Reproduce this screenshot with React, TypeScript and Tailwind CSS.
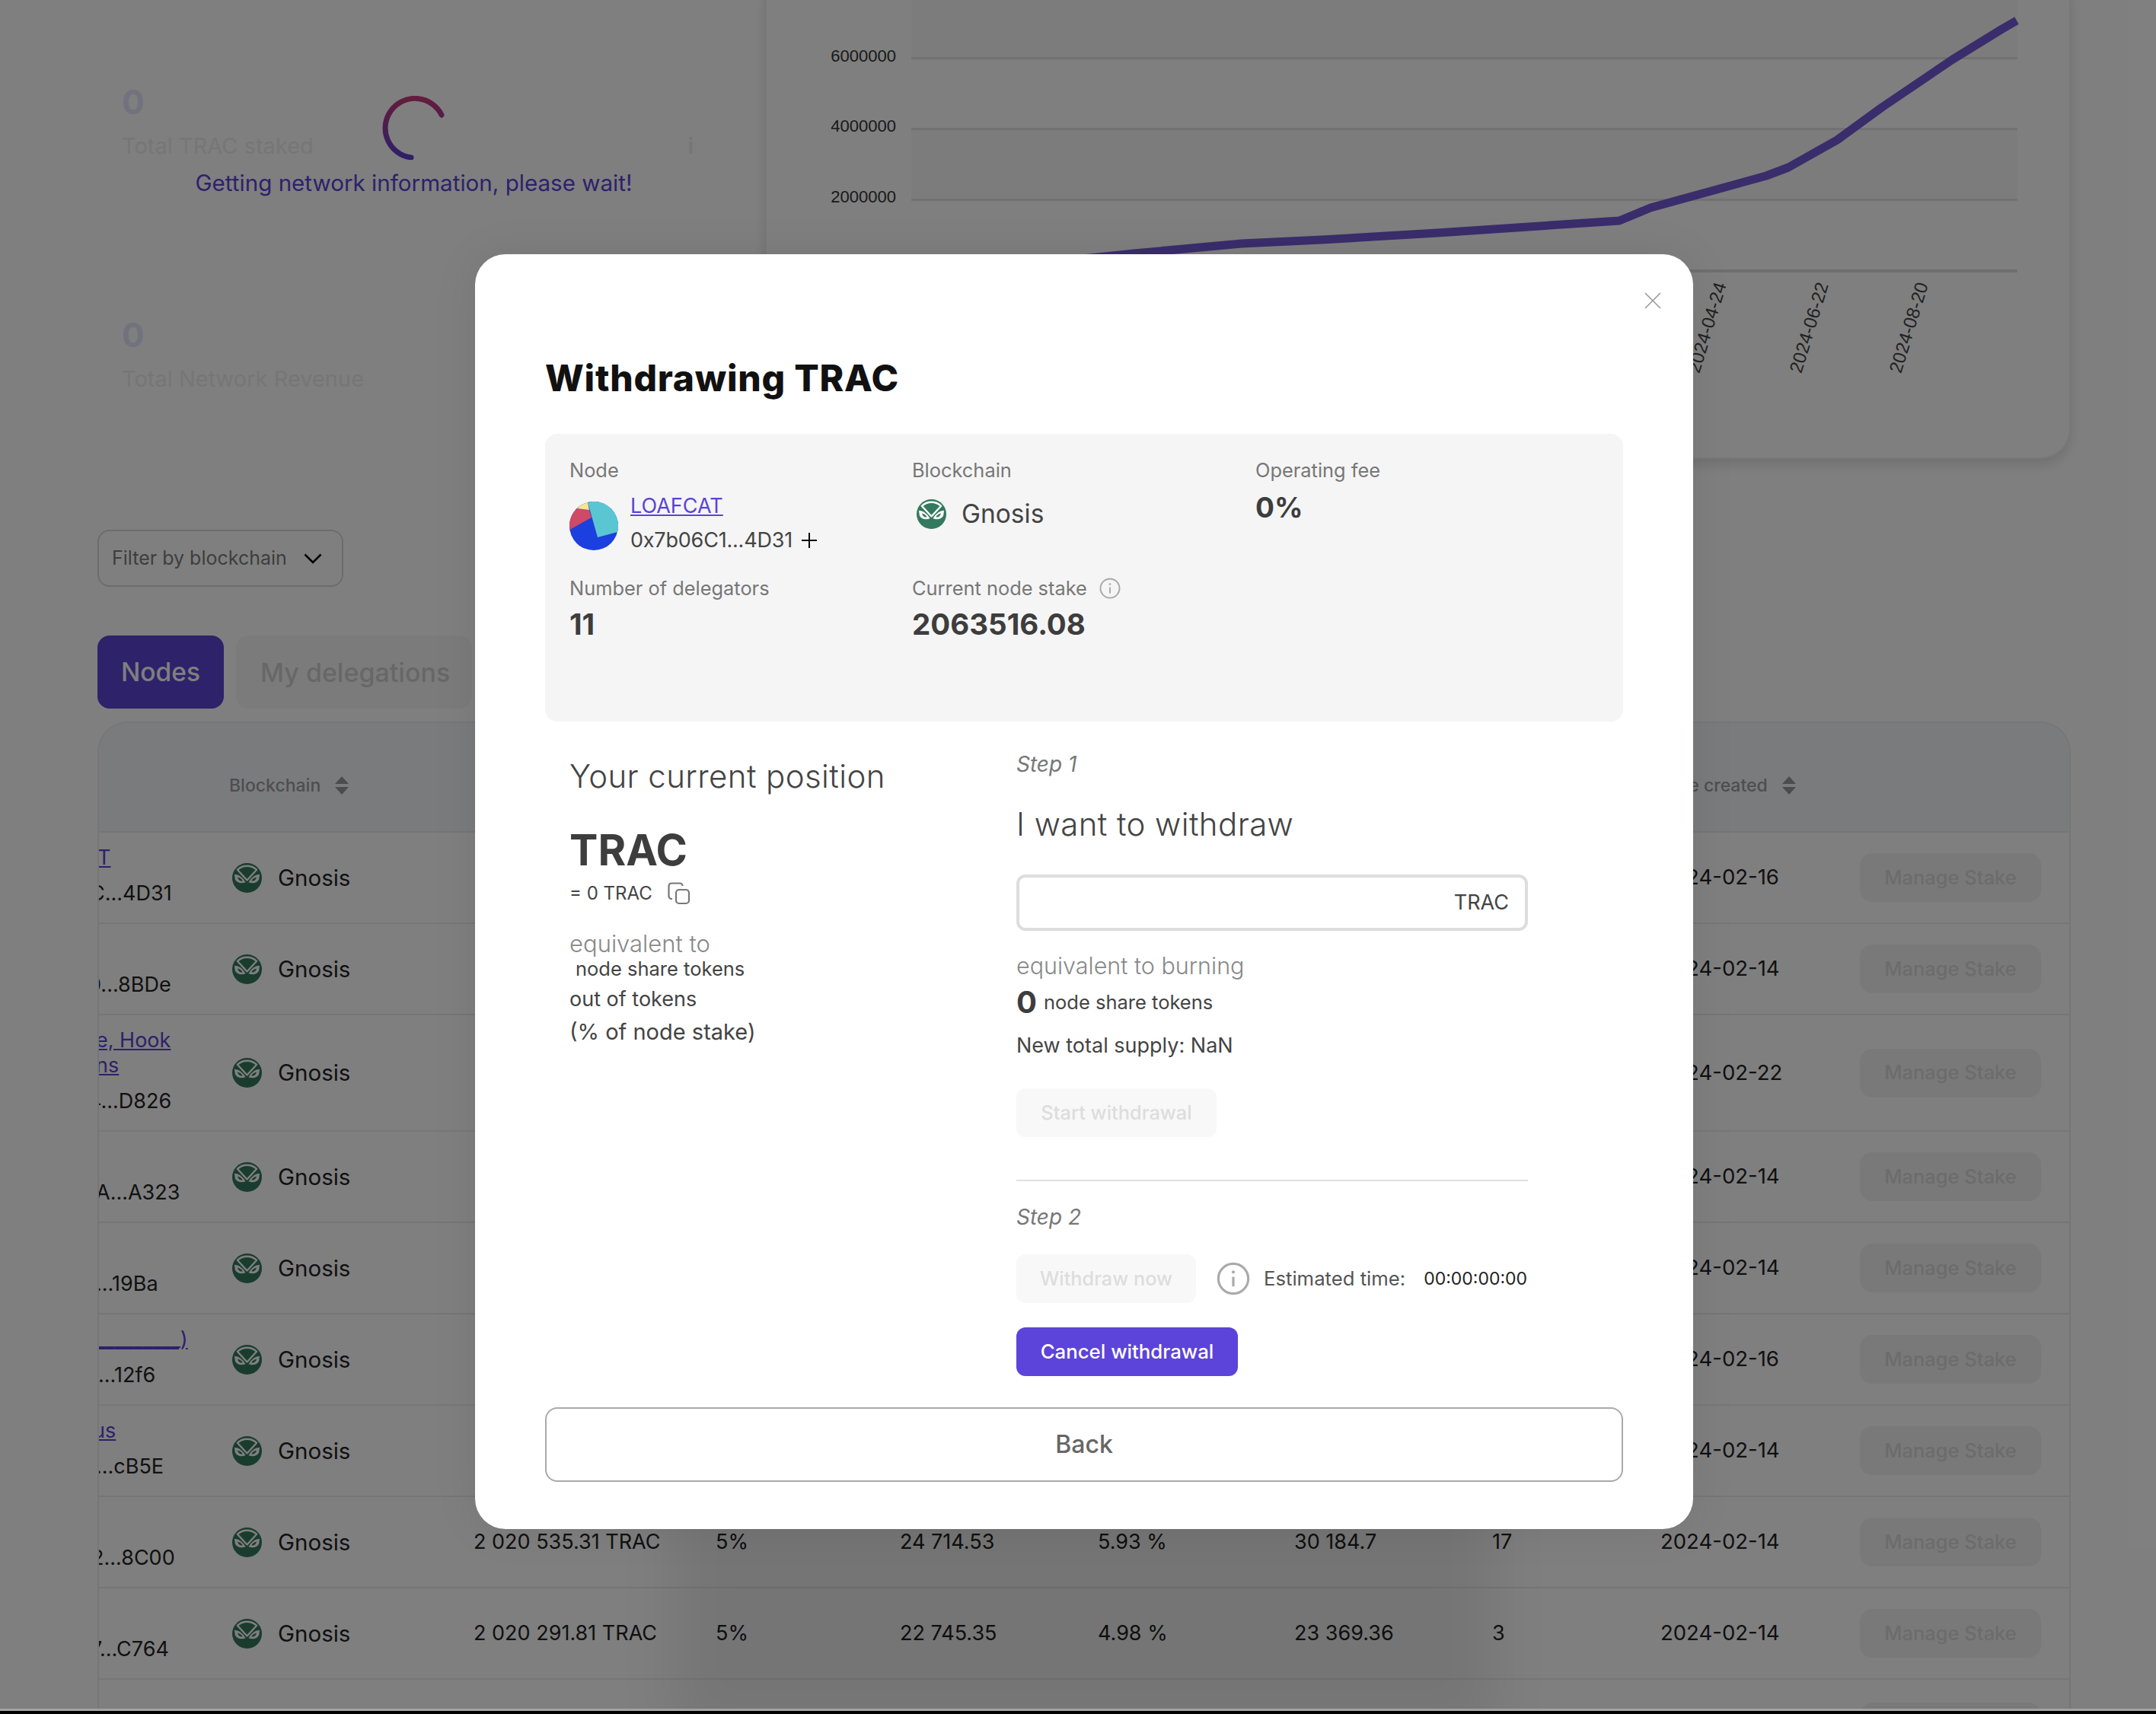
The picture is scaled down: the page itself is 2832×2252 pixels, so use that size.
import React from 'react';

const COLS = 'grid grid-cols-[171px_321px_318px_242px_260px_258px_260px_221px_262px_1fr]';

interface Row {
  name?: string[];
  addr: string;
  date: string;
  nameShift?: string;
  addrShift: string;
  cells?: string[];
}

// the table is scrolled sideways, so the name column is cut at its left edge
const ROWS: Row[] = [
  { name: ['T'], nameShift: '-ml-[2px]', addr: 'C...4D31', addrShift: '-ml-[12px]', date: '2024-02-16' },
  { addr: '0...8BDe', addrShift: '-ml-[14px]', date: '2024-02-14' },
  { name: ['e, Hook', 'ns'], nameShift: '-ml-[4px]', addr: '4...D826', addrShift: '-ml-[14px]', date: '2024-02-22' },
  { addr: 'A...A323', addrShift: '-ml-[4px]', date: '2024-02-14' },
  { addr: '...19Ba', addrShift: '-ml-[4px]', date: '2024-02-14' },
  { name: ['_________)'], nameShift: '-ml-[4px]', addr: 'F...12f6', addrShift: '-ml-[16px]', date: '2024-02-16' },
  { name: ['us'], nameShift: '-ml-[8px]', addr: '...cB5E', addrShift: '-ml-[4px]', date: '2024-02-14' },
  { addr: '2...8C00', addrShift: '-ml-[10px]', date: '2024-02-14', cells: ['2 020 535.31 TRAC', '5%', '24 714.53', '5.93 %', '30 184.7', '17'] },
  { addr: '7...C764', addrShift: '-ml-[11px]', date: '2024-02-14', cells: ['2 020 291.81 TRAC', '5%', '22 745.35', '4.98 %', '23 369.36', '3'] },
];

function GnosisIcon({ className }: { className: string }) {
  return (
    <svg viewBox="0 0 40 40" className={className}>
      <circle cx="20" cy="20" r="20" fill="#33795f" />
      <path d="M7 9 A19 19 0 0 1 33 9 L20 23 Z" fill="#33795f" stroke="#fff" strokeWidth="2.4" strokeLinejoin="round" />
      <path d="M3 15 Q12 15 18 26 Q8 29 4 22 Z" fill="#fff" />
      <path d="M37 15 Q28 15 22 26 Q32 29 36 22 Z" fill="#fff" />
      <path d="M7 19 Q12 20 14 24 Q9 25 7 19 Z" fill="#33795f" />
      <path d="M33 19 Q28 20 26 24 Q31 25 33 19 Z" fill="#33795f" />
    </svg>
  );
}

function InfoIcon({ className }: { className: string }) {
  return (
    <svg viewBox="0 0 28 28" fill="none" className={className}>
      <circle cx="14" cy="14" r="12.5" stroke="#aaa" strokeWidth="2" />
      <path d="M14 12.5V20.5" stroke="#aaa" strokeWidth="2" />
      <circle cx="14" cy="8.5" r="1.3" fill="#aaa" />
    </svg>
  );
}

function SortIcon() {
  return (
    <svg viewBox="0 0 20 26" className="w-[20px] h-[26px]">
      <path d="M10 1 L19 11 H1 Z M10 25 L19 15 H1 Z" fill="#999" />
    </svg>
  );
}

function Chart() {
  return (
    <svg viewBox="1007 -38 1711 639" className="w-full h-full">
      <rect x="1197" y="-38" width="1453" height="114" fill="#f8f8f8" />
      <rect x="1197" y="169" width="1453" height="93" fill="#f8f8f8" />
      {[76, 169, 262].map(y => (
        <rect key={y} x="1197" y={y - 1} width="1453" height="3" fill="#e2e2e2" />
      ))}
      <rect x="1197" y="354" width="1453" height="4" fill="#dedede" />
      {[['6000000', 81], ['4000000', 173], ['2000000', 266]].map(([label, y]) => (
        <text key={label} x="1177" y={y} textAnchor="end" fontSize="22" fill="#333" fontFamily="Liberation Sans, sans-serif">
          {label}
        </text>
      ))}
      <polyline
        points="1300,350 1432,339 1490,333 1631,320 1736,315 1888,306 2127,290 2168,273 2320,231 2349,220 2413,184 2472,141 2565,78 2630,38 2649,27"
        fill="none"
        stroke="#745ad8"
        strokeWidth="11"
        strokeLinejoin="round"
      />
      {[['2024-04-24', 2268], ['2024-06-22', 2402], ['2024-08-20', 2533]].map(([label, x]) => (
        <text
          key={label}
          transform={`translate(${x} 374) rotate(-73)`}
          textAnchor="end"
          fontSize="24"
          fill="#444"
          fontFamily="Liberation Sans, sans-serif"
        >
          {label}
        </text>
      ))}
    </svg>
  );
}

function Background() {
  return (
    <div className="flex-1 min-h-0 overflow-hidden pl-[128px] pr-[112px]">
      {/* top stats + chart */}
      <div className="flex h-[603px]">
        <div className="relative w-[877px] shrink-0 pl-[32px] pt-[102px]">
          <div className="text-[44px] leading-[64px] font-bold text-[#e4e4fc]">0</div>
          <div className="text-[29px] leading-[48px] text-[#ececec] flex justify-between pr-[94px] mt-[2px]">
            <span>Total TRAC staked</span>
            <span className="font-bold">i</span>
          </div>
          <div className="text-[44px] leading-[64px] font-bold text-[#e4e4fc] mt-[192px]">0</div>
          <div className="text-[29px] leading-[48px] text-[#ececec] mt-[2px]">Total Network Revenue</div>
          {/* loading overlay */}
          <div className="absolute left-[129px] top-[126px] w-[573px] flex flex-col items-center">
            <svg viewBox="0 0 84 84" className="w-[84px] h-[84px]">
              <defs>
                <linearGradient id="spin" x1="0" y1="0" x2="0" y2="1">
                  <stop offset="0" stopColor="#c8387a" />
                  <stop offset="1" stopColor="#5a3fd0" />
                </linearGradient>
              </defs>
              <path d="M78 25 A39 39 0 1 0 38 81" fill="none" stroke="url(#spin)" strokeWidth="7" strokeLinecap="round" />
            </svg>
            <div className="text-[29.6px] leading-[40px] text-[#5b43d6] whitespace-nowrap mt-[10px]">
              Getting network information, please wait!
            </div>
          </div>
        </div>
        <div className="w-[1715px] shrink-0 h-[643px] -mt-[40px] bg-white border-2 border-[#f0f0f0] rounded-[40px] shadow-[0_8px_16px_rgba(0,0,0,0.12)] overflow-hidden">
          <Chart />
        </div>
      </div>

      <div className="mt-[93px] w-[323px] h-[75px] border-2 border-[#d8d8d8] rounded-[16px] flex items-center justify-between pl-[17px] pr-[26px]">
        <span className="text-[25px] text-[#7d7d7d]">Filter by blockchain</span>
        <svg viewBox="0 0 24 14" className="w-[24px] h-[14px]" fill="none">
          <path d="M1.5 1.5 L12 12 L22.5 1.5" stroke="#000" strokeWidth="2.6" />
        </svg>
      </div>

      <div className="mt-[64px] flex gap-[16px]">
        <div className="w-[166px] h-[96px] rounded-[16px] bg-[#5d44d6] flex items-center justify-center text-[33.5px] font-medium text-white">
          Nodes
        </div>
        <div className="w-[310px] h-[96px] rounded-[16px] bg-[#f7f7f7] flex items-center pl-[32px] text-[34px] font-medium text-[#cfcfcf] whitespace-nowrap">
          My delegations
        </div>
      </div>

      {/* nodes table */}
      <div className="mt-[17px] border-x-2 border-t-2 border-[#ececec] rounded-t-[40px] overflow-hidden">
        <div className={`${COLS} h-[144px] pt-[22px] items-center bg-[#f4f6fa] border-b-2 border-[#ececec]`}>
          <div />
          <div className="flex items-center gap-[18px] text-[23px] font-medium text-[#9c9ca0]">
            Blockchain <SortIcon />
          </div>
          <div className="col-span-6" />
          <div className="flex items-center gap-[18px] text-[23px] font-medium text-[#9c9ca0] whitespace-nowrap">
            Date created <SortIcon />
          </div>
          <div />
        </div>
        {ROWS.map(row => (
          <div key={row.addr} className={`${COLS} items-center border-b-2 border-[#ececec]`}>
            <div className="overflow-hidden pt-[16px] pb-[21px] text-[27px] leading-[33px] text-[#222]">
              <div className={`min-h-[33px] text-[#5b43d6] underline whitespace-nowrap ${row.nameShift ?? ''}`}>
                {row.name?.map(line => <div key={line}>{line}</div>)}
              </div>
              <div className={`mt-[14px] leading-[34px] whitespace-nowrap ${row.addrShift}`}>{row.addr}</div>
            </div>
            <div className="flex items-center gap-[21px] pl-[4px] text-[29.5px] text-[#222]">
              <GnosisIcon className="w-[39px] h-[39px]" />
              Gnosis
            </div>
            {(row.cells ?? ['', '', '', '', '', '']).map((c, j) => (
              <div key={j} className="text-[27px] text-[#222] whitespace-nowrap">{c}</div>
            ))}
            <div className="text-[27.5px] text-[#222]">{row.date}</div>
            <div className="h-[64px] w-[238px] rounded-[16px] bg-[#f3f3f3] flex items-center justify-center text-[25.5px] font-medium text-[#d8d8d8] whitespace-nowrap">
              Manage Stake
            </div>
          </div>
        ))}
        {/* next row, only the top of its button is in view */}
        <div className={`${COLS} pt-[30px]`}>
          <div className="col-span-9" />
          <div className="h-[64px] w-[238px] rounded-[16px] bg-[#f3f3f3]" />
        </div>
      </div>
    </div>
  );
}

function Label({ children }: { children: React.ReactNode }) {
  return <div className="text-[25.4px] leading-[32px] text-[#777]">{children}</div>;
}

function WithdrawModal() {
  return (
    <div className="absolute left-[624px] top-[334px] w-[1600px] h-[1675px] bg-white rounded-[40px] shadow-[0_530px_70px_-260px_rgba(0,0,0,0.08),0_0_60px_rgba(0,0,0,0.08)] px-[92px] pt-[128px]">
      <svg viewBox="0 0 22 22" className="absolute left-[1536px] top-[50px] w-[22px] h-[22px]" fill="none">
        <path d="M1 1 L21 21 M21 1 L1 21" stroke="#999" strokeWidth="1.6" />
      </svg>

      <h2 className="text-[48px] leading-[70px] font-extrabold text-[#111] tracking-[0.75px]">Withdrawing TRAC</h2>

      {/* node details */}
      <div className="mt-[38px] h-[378px] rounded-[16px] bg-[#f5f5f5] px-[32px] pt-[32px] grid grid-cols-[450px_451px_1fr] grid-rows-[155px_auto]">
        <div>
          <Label>Node</Label>
          <div className="mt-[9px] flex items-center gap-[16px]">
            <svg viewBox="0 0 64 64" className="w-[64px] h-[64px] mt-[6px]">
              <circle cx="32" cy="32" r="32" fill="#1c3fdf" />
              <path d="M0.3 37 L29 21 L26 11 L10 9 A32 32 0 0 0 0.3 37 Z" fill="#cf4a66" />
              <path d="M10 9 L26 11 L24 1 A32 32 0 0 0 10 9 Z" fill="#f8e58c" />
              <path d="M24 1 A32 32 0 0 1 63 40 L37 47 Z" fill="#5ac6d2" />
            </svg>
            <div>
              <div className="text-[27px] leading-[40px] text-[#5b43d6] underline mt-[2px]">LOAFCAT</div>
              <div className="flex items-center gap-[12px] text-[27px] tracking-[-0.2px] leading-[44px] text-[#444] mt-[3px]">
                0x7b06C1...4D31
                <svg viewBox="0 0 20 20" className="w-[20px] h-[20px]" fill="none">
                  <path d="M10 0 V20 M0 10 H20" stroke="#000" strokeWidth="2" />
                </svg>
              </div>
            </div>
          </div>
        </div>
        <div>
          <Label>Blockchain</Label>
          <div className="mt-[17px] flex items-center gap-[20px] text-[33.5px] leading-[48px] text-[#444] pl-[6px]">
            <GnosisIcon className="w-[39px] h-[39px]" />
            Gnosis
          </div>
        </div>
        <div>
          <Label>Operating fee</Label>
          <div className="mt-[8px] text-[37px] leading-[50px] font-bold text-[#3d3d3d]">0%</div>
        </div>
        <div>
          <Label>Number of delegators</Label>
          <div className="mt-[6px] text-[38.5px] leading-[50px] font-bold text-[#3d3d3d]">11</div>
        </div>
        <div>
          <div className="flex items-center gap-[16px]">
            <Label>Current node stake</Label>
            <InfoIcon className="w-[28px] h-[28px]" />
          </div>
          <div className="mt-[6px] text-[38.5px] leading-[50px] font-bold text-[#3d3d3d]">2063516.08</div>
        </div>
      </div>

      <div className="flex">
        {/* current position */}
        <div className="w-[619px] shrink-0 pl-[32px] pt-[46px] text-[#444]">
          <div className="text-[42px] leading-[52px] font-light tracking-[0.4px]">Your current position</div>
          <div className="mt-[36px] text-[56px] leading-[70px] font-bold text-[#3d3d3d]">TRAC</div>
          <div className="flex items-center gap-[20px] text-[24px] leading-[36px] mt-[4px]">
            = 0 TRAC
            <svg viewBox="0 0 30 30" className="w-[30px] h-[30px]" fill="none" stroke="#777" strokeWidth="2.2">
              <rect x="11" y="10" width="17" height="18" rx="4" />
              <path d="M6 22 H5 a3.5 3.5 0 0 1 -3.5 -3.5 V5 a3.5 3.5 0 0 1 3.5 -3.5 H16 a3.5 3.5 0 0 1 3.5 3.5" />
            </svg>
          </div>
          <div className="mt-[30px] text-[31px] leading-[36px] font-light text-[#888]">equivalent to</div>
          <div className="pl-[8px] text-[25.5px] leading-[30px]">node share tokens</div>
          <div className="mt-[5px] text-[27px] leading-[40px]">out of tokens</div>
          <div className="mt-[1px] text-[29px] leading-[44px]">(% of node stake)</div>
        </div>

        {/* steps */}
        <div className="w-[672px] shrink-0 pt-[36px]">
          <div className="text-[28px] leading-[40px] italic text-[#777]">Step 1</div>
          <div className="mt-[31px] text-[42px] leading-[56px] font-light tracking-[0.4px] text-[#444]">I want to withdraw</div>
          <div className="mt-[38px] h-[74px] border-[4px] border-[#ddd] rounded-[12px] flex items-center justify-end pr-[21px] text-[27px] text-[#444]">
            TRAC
          </div>
          <div className="mt-[26px] text-[30.5px] leading-[40px] font-light text-[#888]">equivalent to burning</div>
          <div className="mt-[3px] flex items-center gap-[9px] text-[25.5px] text-[#444] h-[50px]">
            <span className="text-[40px] font-bold text-[#3d3d3d]">0</span>
            node share tokens
          </div>
          <div className="mt-[12px] text-[27px] leading-[40px] text-[#444]">New total supply: NaN</div>
          <div className="mt-[36px] w-[263px] h-[64px] rounded-[12px] bg-[#f8f8f8] flex items-center justify-center text-[25.4px] font-medium text-[#ddd]">
            Start withdrawal
          </div>
          <div className="mt-[56px] h-[2px] bg-[#e0e0e0]" />
          <div className="mt-[27px] text-[28px] leading-[40px] italic text-[#777]">Step 2</div>
          <div className="mt-[29px] flex items-center">
            <div className="w-[236px] h-[64px] rounded-[12px] bg-[#f8f8f8] flex items-center justify-center text-[25.3px] font-medium text-[#ddd]">
              Withdraw now
            </div>
            <InfoIcon className="w-[44px] h-[44px] ml-[27px]" />
            <span className="ml-[18px] text-[25.7px] text-[#555] whitespace-nowrap">Estimated time:</span>
            <span className="ml-[24px] text-[23px] text-[#222]">00:00:00:00</span>
          </div>
          <div className="mt-[32px] w-[291px] h-[64px] rounded-[12px] bg-[#5c43d9] flex items-center justify-center text-[25.8px] font-medium text-white">
            Cancel withdrawal
          </div>
        </div>
      </div>

      <div className="absolute left-[92px] right-[92px] top-[1515px] h-[98px] border-2 border-[#aaa] rounded-[16px] flex items-center justify-center text-[32px] font-medium text-[#666]">
        Back
      </div>
    </div>
  );
}

export default function App() {
  return (
    <div className="relative w-[2832px] h-[2252px] overflow-hidden bg-white flex flex-col font-['Inter',sans-serif]">
      <Background />
      <div className="absolute inset-0 bg-black/50" />
      <WithdrawModal />
      <div className="relative h-[3px] bg-[#a3a3a3]" />
      <div className="relative h-[4px] bg-black" />
    </div>
  );
}
